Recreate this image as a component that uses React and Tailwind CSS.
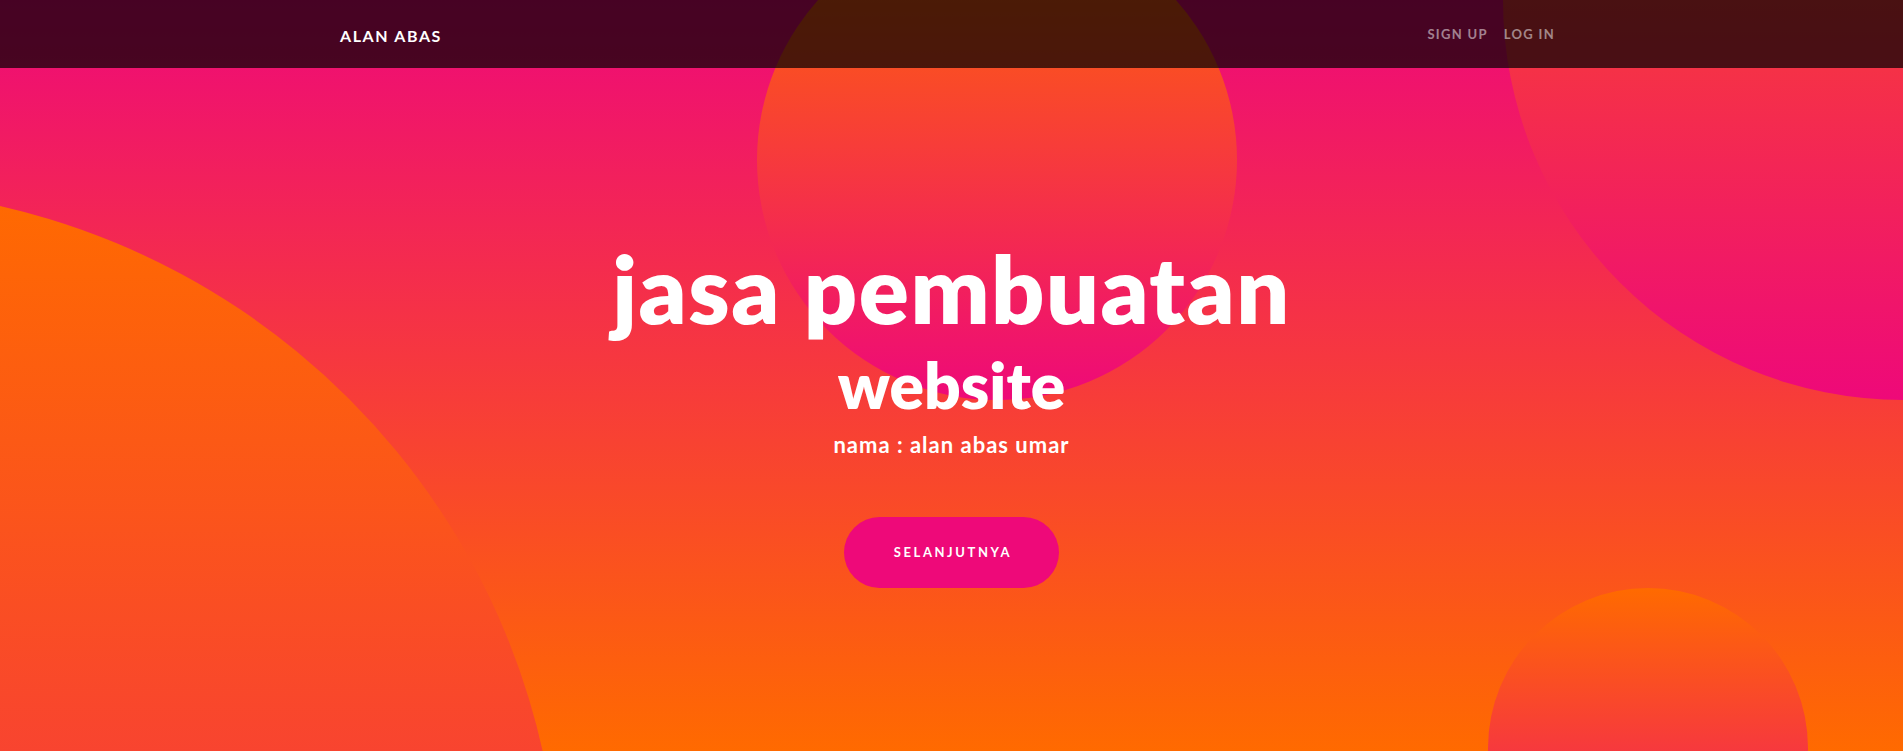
export default function App() {
  return (
    <div className="min-h-screen bg-white font-['Lato','Liberation_Sans',sans-serif]">
      <header className="relative h-[751px] overflow-hidden bg-[linear-gradient(0deg,#ff6a00_0%,#ee0979_100%)]">
        {/* background circles */}
        <div className="absolute left-[-880px] top-[188px] h-[1440px] w-[1440px] rounded-full bg-[linear-gradient(0deg,#ee0979_0%,#ff6a00_100%)]" />
        <div className="absolute right-[-400px] top-[-400px] h-[800px] w-[800px] rounded-full bg-[linear-gradient(0deg,#ee0979_0%,#ff6a00_100%)]" />
        <div className="absolute right-[5%] top-[588px] h-[320px] w-[320px] rounded-full bg-[linear-gradient(0deg,#ee0979_0%,#ff6a00_100%)]" />
        <div className="absolute right-[35%] top-[-80px] h-[480px] w-[480px] rounded-full bg-[linear-gradient(0deg,#ee0979_0%,#ff6a00_100%)]" />

        <nav className="absolute inset-x-0 top-0 z-10 h-[68px] bg-black/70">
          <div className="mx-auto flex h-full w-[1223px] items-center justify-between">
            <a href="#" className="mt-[3px] text-base font-bold uppercase leading-6 tracking-[1.6px] text-white">
              Alan Abas
            </a>
            <ul className="flex items-center">
              <li>
                <a href="#" className="block px-2 text-[13px] font-bold uppercase leading-6 tracking-[1.3px] text-white/50">
                  Sign Up
                </a>
              </li>
              <li>
                <a href="#" className="block px-2 text-[13px] font-bold uppercase leading-6 tracking-[1.3px] text-white/50">
                  Log In
                </a>
              </li>
            </ul>
          </div>
        </nav>

        <div className="relative z-[1] flex flex-col items-center pt-[242px] text-center text-white">
          <h1 className="text-[93px] font-extrabold leading-none tracking-[1.5px]">jasa pembuatan</h1>
          <h2 className="mt-[18px] text-[64px] font-extrabold leading-none">website</h2>
          <p className="mt-[17px] text-[22px] font-bold leading-none tracking-[1px]">nama : alan abas umar</p>
          <a
            href="#"
            className="mt-[61px] flex h-[71px] w-[215px] items-center justify-center rounded-full bg-[#ee0979] pl-[3px] text-[13px] font-bold uppercase tracking-[2.6px] text-white"
          >
            Selanjutnya
          </a>
        </div>
      </header>
    </div>
  );
}
